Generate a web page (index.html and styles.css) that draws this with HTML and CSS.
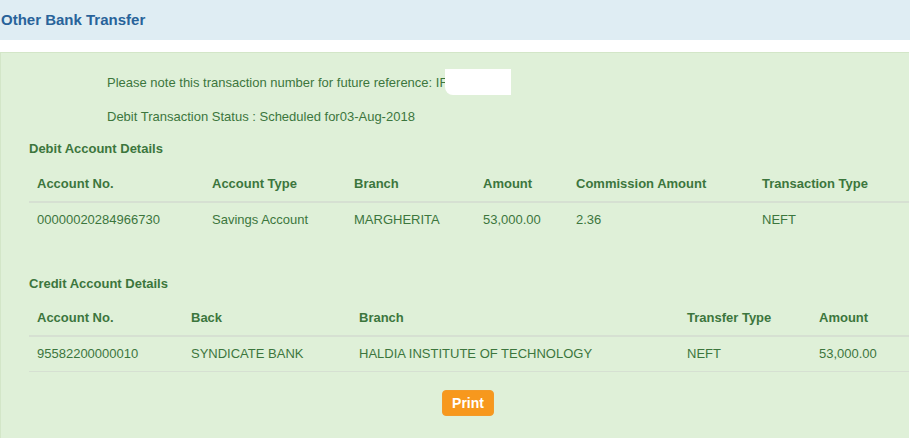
FILE: index.html
```html
<!DOCTYPE html>
<html>
<head>
<meta charset="utf-8">
<link rel="stylesheet" href="styles.css">
</head>
<body>
<div class="page-head"><h1 class="page-title">Other Bank Transfer</h1></div>
<div class="panel">
  <p class="note">Please note this transaction number for future reference: IF<span class="redact"></span></p>
  <p class="note note-2">Debit Transaction Status : Scheduled for03-Aug-2018</p>

  <h2 class="section">Debit Account Details</h2>
  <table class="grid debit">
    <colgroup><col class="d1"><col class="d2"><col class="d3"><col class="d4"><col class="d5"><col class="d6"></colgroup>
    <thead><tr><th>Account No.</th><th>Account Type</th><th>Branch</th><th>Amount</th><th>Commission Amount</th><th>Transaction Type</th></tr></thead>
    <tbody><tr><td>00000020284966730</td><td>Savings Account</td><td>MARGHERITA</td><td>53,000.00</td><td>2.36</td><td>NEFT</td></tr></tbody>
  </table>

  <h2 class="section section-2">Credit Account Details</h2>
  <table class="grid credit">
    <colgroup><col class="c1"><col class="c2"><col class="c3"><col class="c4"><col class="c5"></colgroup>
    <thead><tr><th>Account No.</th><th>Back</th><th>Branch</th><th>Transfer Type</th><th>Amount</th></tr></thead>
    <tbody><tr><td>95582200000010</td><td>SYNDICATE BANK</td><td>HALDIA INSTITUTE OF TECHNOLOGY</td><td>NEFT</td><td>53,000.00</td></tr></tbody>
  </table>

  <div class="actions"><button class="btn-print">Print</button></div>
</div>
</body>
</html>
```
FILE: styles.css
```css
html, body { margin: 0; padding: 0; background: #fff; }
body { font-family: "Liberation Sans", Arial, sans-serif; font-size: 13px; color: #3c763d; overflow: hidden; }

.page-head { height: 40px; background: #dfedf3; }
.page-title { margin: 0; padding-left: 1px; font-size: 15px; font-weight: bold; line-height: 40px; color: #28639a; }

.panel {
  margin-top: 12px;
  width: 880px;
  height: 365px;
  padding: 20px 0 0 28px;
  background: #dff0d8;
  border: 1px solid #d3e6c8;
  border-right: 0;
  border-bottom: 0;
}

.note { margin: 0 0 0 78px; line-height: 18px; }
.note-2 { margin-top: 16px; }
.redact {
  display: inline-block;
  width: 66px;
  height: 26px;
  margin: -4px 0 -4px -2px;
  vertical-align: -4px;
  background: #fff;
  border-radius: 0 0 0 8px;
}

.section { margin: 14px 0 9px; font-size: 13px; font-weight: bold; line-height: 18px; color: #3c763d; }
.section-2 { margin-top: 38px; margin-bottom: 8px; }

.grid { width: 880px; border-collapse: collapse; table-layout: fixed; }
.grid th, .grid td { padding: 8px; line-height: 18px; text-align: left; white-space: nowrap; }
.grid th { font-weight: bold; border-bottom: 2px solid #d6e0d2; }
.grid td { font-weight: normal; }
.credit td { border-bottom: 1px solid #d6e0d2; }

.d1 { width: 175px; } .d2 { width: 142px; } .d3 { width: 129px; }
.d4 { width: 93px; } .d5 { width: 186px; } .d6 { width: 155px; }
.c1 { width: 154px; } .c2 { width: 168px; } .c3 { width: 328px; }
.c4 { width: 132px; } .c5 { width: 98px; }

.actions { display: flex; justify-content: center; padding-top: 18px; padding-right: 2px; }
.btn-print {
  height: 26px;
  padding: 0 9px;
  font-family: "Liberation Sans", Arial, sans-serif;
  font-size: 14px;
  font-weight: bold;
  color: #fff;
  background: #f7981d;
  border: 1px solid #f39a28;
  border-radius: 4px;
}
```
